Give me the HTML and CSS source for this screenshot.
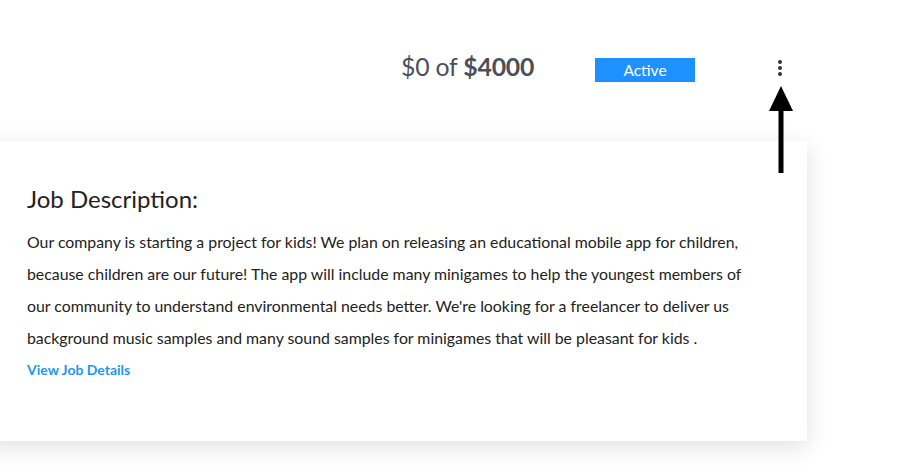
FILE: index.html
```html
<!DOCTYPE html>
<html>
<head>
<meta charset="utf-8">
<link rel="stylesheet" href="styles.css">
</head>
<body>
<div class="page">
  <div class="top-row">
    <div class="budget">$0 of <b>$4000</b></div>
    <div class="status">Active</div>
    <div class="menu">
      <span class="dot"></span><span class="dot"></span><span class="dot"></span>
    </div>
  </div>
  <svg class="arrow" width="26" height="90" viewBox="0 0 26 90">
    <polygon points="13,0 25,25 1,25" fill="#000"/>
    <rect x="10.5" y="22" width="5" height="65" fill="#000"/>
  </svg>
  <div class="card">
    <h2 class="card-title">Job Description:</h2>
    <p class="card-text">Our company is starting a project for kids! We plan on releasing an educational mobile app for children, because children are our future! The app will include many minigames to help the youngest members of our community to understand environmental needs better. We're looking for a freelancer to deliver us background music samples and many sound samples for minigames that will be pleasant for kids .</p>
    <a class="card-link" href="#">View Job Details</a>
  </div>
</div>
</body>
</html>
```
FILE: styles.css
```css
html, body {
  margin: 0;
  padding: 0;
  background: #fff;
}
body {
  font-family: Lato, "Open Sans", sans-serif;
  color: #222;
}
.page {
  position: relative;
  width: 897px;
  height: 472px;
  overflow: hidden;
}
.top-row {
  display: flex;
  align-items: center;
  height: 28px;
  padding-top: 56px;
  padding-left: 401px;
}
.budget {
  font-size: 24.8px;
  color: #4b5058;
  letter-spacing: -0.2px;
  width: 194px;
  margin-bottom: 8px;
}
.budget b {
  font-weight: 700;
}
.status {
  width: 100px;
  height: 24px;
  background: #1e90ff;
  color: #fff;
  font-size: 15.5px;
  line-height: 24px;
  text-align: center;
}
.menu {
  display: flex;
  flex-direction: column;
  gap: 2px;
  margin-left: 83px;
  margin-bottom: 4px;
}
.dot {
  width: 4px;
  height: 4px;
  border-radius: 50%;
  background: #333;
}
.arrow {
  position: absolute;
  left: 768px;
  top: 86px;
}
.card {
  margin-top: 57px;
  margin-left: -20px;
  width: 827px;
  height: 300px;
  box-sizing: border-box;
  padding: 44px 0 0 47px;
  background: #fff;
  box-shadow: 0 6px 22px rgba(0,0,0,0.12);
}
.card-title {
  margin: 0;
  font-size: 24px;
  font-weight: 400;
  color: #222;
  line-height: 28px;
}
.card-text {
  margin: 13px 0 0;
  font-size: 15.85px;
  line-height: 32px;
  color: #222;
  width: 725px;
}
.card-link {
  display: block;
  margin-top: 7px;
  font-size: 14px;
  font-weight: 700;
  color: #2196f3;
  text-decoration: none;
}
```
